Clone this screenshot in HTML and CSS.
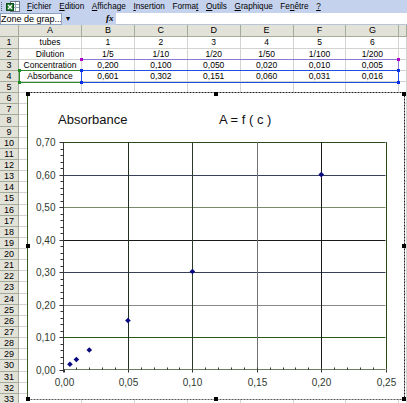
FILE: index.html
```html
<!DOCTYPE html>
<html>
<head>
    <title>Classeur - Absorbance</title>
    <link rel="stylesheet" href="styles.css">
</head>
<body>
    <div class="menubar">
        <span class="grip"></span>
        <svg class="xl-icon" width="14" height="11" viewBox="0 0 14 11">
            <rect x="4.5" y="0.5" width="9" height="10" fill="#fff" stroke="#6a7a8a"/>
            <line x1="5" y1="3.5" x2="13" y2="3.5" stroke="#9ab"/>
            <line x1="5" y1="6.5" x2="13" y2="6.5" stroke="#9ab"/>
            <line x1="9.5" y1="1" x2="9.5" y2="10" stroke="#9ab"/>
            <rect x="0.5" y="2.5" width="7" height="7" fill="#1f7a2e" stroke="#0f4a1a"/>
            <path d="M2 4 L6 8 M6 4 L2 8" stroke="#fff" stroke-width="1.2"/>
        </svg>
        <div class="menu">
            <span><u>F</u>ichier</span>
            <span><u>E</u>dition</span>
            <span><u>A</u>ffichage</span>
            <span><u>I</u>nsertion</span>
            <span>Forma<u>t</u></span>
            <span><u>O</u>utils</span>
            <span><u>G</u>raphique</span>
            <span>Fe<u>n</u>être</span>
            <span><u>?</u></span>
        </div>
    </div>

    <div class="formulabar">
        <div class="namebox">Zone de grap...</div>
        <div class="namearrow">&#9662;</div>
        <div class="fx">fx</div>
        <div class="formula"></div>
    </div>

    <div class="sheet" id="sheet">
        <div class="c h corner"></div>
        <div class="c h">A</div>
        <div class="c h">B</div>
        <div class="c h">C</div>
        <div class="c h">D</div>
        <div class="c h">E</div>
        <div class="c h">F</div>
        <div class="c h">G</div>
        <div class="c h last"></div>

        <div class="c h">1</div>
        <div class="c">tubes</div>
        <div class="c">1</div>
        <div class="c">2</div>
        <div class="c">3</div>
        <div class="c">4</div>
        <div class="c">5</div>
        <div class="c">6</div>
        <div class="c"></div>

        <div class="c h">2</div>
        <div class="c">Dilution</div>
        <div class="c">1/5</div>
        <div class="c">1/10</div>
        <div class="c">1/20</div>
        <div class="c">1/50</div>
        <div class="c">1/100</div>
        <div class="c">1/200</div>
        <div class="c"></div>

        <div class="c h">3</div>
        <div class="c">Concentration</div>
        <div class="c">0,200</div>
        <div class="c">0,100</div>
        <div class="c">0,050</div>
        <div class="c">0,020</div>
        <div class="c">0,010</div>
        <div class="c">0,005</div>
        <div class="c"></div>

        <div class="c h">4</div>
        <div class="c">Absorbance</div>
        <div class="c">0,601</div>
        <div class="c">0,302</div>
        <div class="c">0,151</div>
        <div class="c">0,060</div>
        <div class="c">0,031</div>
        <div class="c">0,016</div>
        <div class="c"></div>

        <!-- source range highlights -->
        <div class="range range-x"></div>
        <div class="range range-y"></div>
        <div class="range range-name"></div>
        <span class="hdl purple" style="left:80px;top:33px"></span>
        <span class="hdl purple" style="left:397px;top:33px"></span>
        <span class="hdl blue" style="left:80px;top:44px"></span>
        <span class="hdl blue" style="left:397px;top:44px"></span>
        <span class="hdl blue" style="left:80px;top:56px"></span>
        <span class="hdl blue" style="left:397px;top:56px"></span>
        <span class="hdl green" style="left:18px;top:44px"></span>
        <span class="hdl green" style="left:18px;top:56px"></span>

        <div class="chart">
            <svg width="382" height="313" viewBox="25 90 382 313" font-family="Liberation Sans, Arial, sans-serif">
                <rect x="27" y="92" width="377" height="307" fill="#fff"/>
                <line x1="27.5" y1="92.5" x2="404.5" y2="92.5" stroke="#1a1f1a" stroke-dasharray="2 1"/>
                <line x1="404.5" y1="92.5" x2="404.5" y2="399.5" stroke="#1a1f1a" stroke-dasharray="2 1"/>
                <line x1="27.5" y1="399.5" x2="404.5" y2="399.5" stroke="#555" stroke-dasharray="2 1"/>
                <line x1="27.5" y1="92.5" x2="27.5" y2="399.5" stroke="#3a5a24"/>

                <text x="58" y="124" font-size="13" fill="#111">Absorbance</text>
                <text x="219" y="124" font-size="13" fill="#111">A = f ( c )</text>

                <g id="grid"></g>
                <g id="ticks" stroke="#333"></g>
                <g id="labels" font-size="10" fill="#2f3a2f"></g>
                <g id="points" fill="#0a0a80"></g>

                <rect x="26" y="92" width="4" height="4" fill="#000"/>
                <rect x="214" y="92" width="4" height="4" fill="#000"/>
                <rect x="402" y="92" width="4" height="4" fill="#000"/>
                <rect x="26" y="244" width="4" height="4" fill="#000"/>
                <rect x="402" y="244" width="4" height="4" fill="#000"/>
                <rect x="26" y="397" width="4" height="4" fill="#000"/>
                <rect x="214" y="397" width="4" height="4" fill="#000"/>
                <rect x="402" y="397" width="4" height="4" fill="#000"/>
            </svg>
        </div>
    </div>

    <script>
        // empty rows 5..33
        let sheet = document.getElementById("sheet");
        let firstRange = sheet.querySelector(".range");
        for (let r = 5; r <= 33; r++) {
            let head = document.createElement("div");
            head.className = "c h";
            head.textContent = r;
            sheet.insertBefore(head, firstRange);
            for (let k = 0; k < 8; k++) {
                let cell = document.createElement("div");
                cell.className = "c";
                sheet.insertBefore(cell, firstRange);
            }
        }

        // chart
        let ns = "http://www.w3.org/2000/svg";
        let x0 = 63.5, y0 = 369.5;
        function px(c){ return x0 + c * 1288.8; }
        function py(a){ return y0 - a * 324.3; }

        function line(parent, x1, y1, x2, y2, color){
            let l = document.createElementNS(ns, "line");
            l.setAttribute("x1", x1); l.setAttribute("y1", y1);
            l.setAttribute("x2", x2); l.setAttribute("y2", y2);
            if (color) l.setAttribute("stroke", color);
            parent.appendChild(l);
        }
        function label(parent, x, y, txt, anchor){
            let t = document.createElementNS(ns, "text");
            t.setAttribute("x", x); t.setAttribute("y", y);
            t.setAttribute("text-anchor", anchor);
            t.textContent = txt;
            parent.appendChild(t);
        }

        let grid = document.getElementById("grid");
        let hColors = ["#6e7e62", "#2a5a1a", "#8a8a8a", "#384058", "#1a1a1a", "#7a8a6a", "#3a4060", "#2a4a1a"];
        for (let i = 1; i <= 7; i++) {
            let y = Math.round(py(i / 10)) + 0.5;
            line(grid, x0, y, 385.5, y, hColors[i]);
        }
        let vColors = ["#3a3a3a", "#203020", "#2a3a2a", "#707070", "#1a1a1a", "#2a4a1a"];
        for (let i = 1; i <= 5; i++) {
            let x = Math.round(px(i * 0.05)) + 0.5;
            line(grid, x, 142, x, y0, vColors[i]);
        }
        line(grid, x0, y0, 385.5, y0, "#6e7e62");
        line(grid, x0, 142, x0, y0 + 3, "#3a3a3a");

        let ticks = document.getElementById("ticks");
        for (let i = 1; i < 35; i++) {
            let y = Math.round(py(i * 0.02)) + 0.5;
            line(ticks, 60.5, y, x0, y);
        }
        for (let i = 0; i <= 7; i++) {
            let y = Math.round(py(i / 10)) + 0.5;
            line(ticks, 59.5, y, x0, y);
        }
        for (let i = 1; i < 25; i++) {
            let x = Math.round(px(i * 0.01)) + 0.5;
            line(ticks, x, y0 - 2, x, y0);
        }
        for (let i = 0; i <= 5; i++) {
            let x = Math.round(px(i * 0.05)) + 0.5;
            line(ticks, x, y0, x, y0 + 3);
        }

        let labels = document.getElementById("labels");
        for (let i = 0; i <= 7; i++) {
            label(labels, 55.5, Math.round(py(i / 10)) + 4, "0," + i + "0", "end");
        }
        let xs = ["0,00", "0,05", "0,10", "0,15", "0,20", "0,25"];
        for (let i = 0; i <= 5; i++) {
            label(labels, Math.round(px(i * 0.05)) + 0.5, 386, xs[i], "middle");
        }

        let data = [[0.005, 0.016], [0.01, 0.031], [0.02, 0.060], [0.05, 0.151], [0.1, 0.302], [0.2, 0.601]];
        let points = document.getElementById("points");
        data.forEach(function(d){
            let x = px(d[0]), y = py(d[1]);
            let p = document.createElementNS(ns, "path");
            p.setAttribute("d", "M" + x + " " + (y - 2.8) + " l2.8 2.8 l-2.8 2.8 l-2.8 -2.8 z");
            points.appendChild(p);
        });
    </script>
</body>
</html>
```

FILE: styles.css
```css
body{
    margin: 0;
    width: 407px;
    height: 403px;
    overflow: hidden;
    background-color: #ffffff;
    font-family: "Liberation Sans", Arial, Helvetica, sans-serif;
    color: #000;
}
.menubar{
    height: 13px;
    display: flex;
    align-items: center;
    background-color: #c5d2ee;
    font-size: 8.2px;
}
.grip{
    width: 1px;
    height: 9px;
    margin-left: 1px;
    border-left: 1px dotted #55607a;
}
.xl-icon{
    margin-left: 3px;
}
.menu{
    display: flex;
    gap: 7.6px;
    margin-left: 7px;
}
.formulabar{
    height: 12px;
    display: flex;
    background-color: #c5d2ee;
    font-size: 9px;
}
.namebox{
    width: 62px;
    background-color: #fff;
    border: 1px solid #8ea2c2;
    box-sizing: border-box;
    line-height: 10px;
    white-space: nowrap;
    overflow: hidden;
}
.namearrow{
    width: 40px;
    padding-left: 4px;
    font-size: 8px;
    line-height: 11px;
}
.fx{
    width: 10px;
    font-style: italic;
    font-weight: 700;
    font-family: "Liberation Serif", serif;
    line-height: 11px;
}
.formula{
    flex: 1;
    background-color: #fff;
    border-bottom: 1px solid #b9c4d8;
}
.sheet{
    position: relative;
    display: grid;
    grid-template-columns: 19px 63px repeat(6, 52.9px) 1fr;
    grid-template-rows: 12.4px;
    grid-auto-rows: 11.15px;
    font-size: 8.5px;
}
.c{
    box-sizing: border-box;
    border-right: 1px solid #d3d3cf;
    border-bottom: 1px solid #d3d3cf;
    text-align: center;
    line-height: 10px;
    white-space: nowrap;
    overflow: hidden;
}
.h{
    background-color: #e3e2d9;
    border-right-color: #a3ac9a;
    border-bottom-color: #a3ac9a;
    font-size: 9px;
    line-height: 11px;
}
.range{
    position: absolute;
    box-sizing: border-box;
}
.range-x{
    left: 81px;
    top: 34px;
    width: 318px;
    height: 12px;
    border-top: 1px solid #8a78d6;
    border-right: 1px solid #8a78d6;
}
.range-y{
    left: 81px;
    top: 45px;
    width: 318px;
    height: 13px;
    border: 1px solid #1f4fe0;
}
.range-name{
    left: 19px;
    top: 45px;
    width: 63px;
    height: 13px;
    border: 1px solid #2b8a2b;
    border-right: none;
}
.hdl{
    position: absolute;
    width: 3px;
    height: 3px;
}
.purple{
    background-color: #b000c8;
}
.blue{
    background-color: #0b30e8;
}
.green{
    background-color: #1f8a1f;
}
.chart{
    position: absolute;
    left: 25px;
    top: 65px;
    width: 382px;
    height: 313px;
}
.chart svg{
    display: block;
}
```
